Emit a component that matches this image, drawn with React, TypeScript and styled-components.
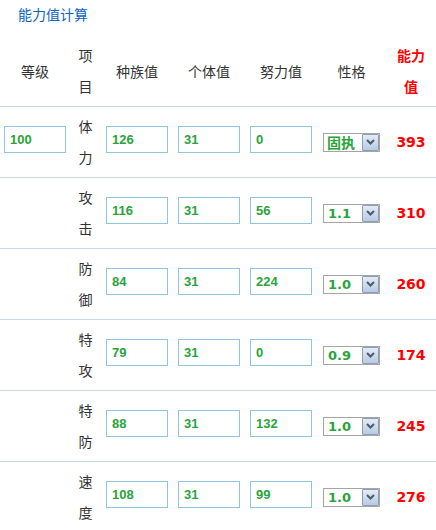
import React from 'react';
import styled, { createGlobalStyle } from 'styled-components';

const GlobalStyle = createGlobalStyle`
  html, body {
    margin: 0;
    padding: 0;
    background: #fff;
  }
  body {
    font-family: 'Noto Sans CJK SC', 'Liberation Sans', sans-serif;
    color: #333;
  }
`;

const COLS = '70px 31px 72px 72px 72px 69px 50px';

const Page = styled.div`
  width: 436px;
`;

const Title = styled.div`
  height: 36px;
  box-sizing: border-box;
  padding: 6px 0 0 18px;
  font-size: 14px;
  line-height: 16px;
  color: #0a64c4;
`;

const Row = styled.div`
  display: grid;
  grid-template-columns: ${COLS};
  height: 71px;
  box-sizing: border-box;
  border-bottom: 1px solid #c9d9ea;
`;

const Cell = styled.div`
  display: flex;
  align-items: center;
  justify-content: center;
  font-size: 14px;
  color: #333;
`;

const Stacked = styled.div<{ $red?: boolean }>`
  display: flex;
  flex-direction: column;
  align-items: center;
  font-size: 14px;
  line-height: 31px;
  color: ${(p) => (p.$red ? '#ff0000' : '#333')};
  font-weight: ${(p) => (p.$red ? 'bold' : 'normal')};
`;

const NumInput = styled.input`
  width: 62px;
  height: 27px;
  box-sizing: border-box;
  margin-bottom: 6px;
  padding: 0 0 0 5px;
  border: 1px solid #8fc6de;
  font-family: 'Liberation Sans', Arial, sans-serif;
  font-size: 13px;
  font-weight: bold;
  color: #2aa33a;
  outline: none;
  background: #fff;
`;

const SelectBox = styled.div`
  width: 57px;
  height: 19px;
  box-sizing: border-box;
  border: 1px solid #a5a5a5;
  display: flex;
  align-items: stretch;
  background: #fff;
`;

const SelectValue = styled.span`
  flex: 1;
  padding-left: 4px;
  font-family: 'DejaVu Sans', 'Noto Sans CJK SC', sans-serif;
  font-size: 13px;
  font-weight: bold;
  line-height: 17px;
  color: #2aa33a;
  white-space: nowrap;
`;

const SelectValueCjk = styled(SelectValue)`
  font-family: 'Noto Sans CJK SC', sans-serif;
  font-size: 14px;
  padding-left: 3px;
`;

const ArrowButton = styled.span`
  width: 17px;
  box-sizing: border-box;
  border: 1px solid #8e9db4;
  border-radius: 1px;
  background: linear-gradient(#e3ebf6, #b7cbe4);
  display: flex;
  align-items: center;
  justify-content: center;
`;

const Result = styled.span`
  font-family: 'DejaVu Sans', Verdana, sans-serif;
  font-size: 14px;
  font-weight: bold;
  color: #ff0000;
`;

type Stat = {
  label: string;
  base: number;
  iv: number;
  ev: number;
  nature: string;
  value: number;
};

const stats: Stat[] = [
  { label: '体力', base: 126, iv: 31, ev: 0, nature: '固执', value: 393 },
  { label: '攻击', base: 116, iv: 31, ev: 56, nature: '1.1', value: 310 },
  { label: '防御', base: 84, iv: 31, ev: 224, nature: '1.0', value: 260 },
  { label: '特攻', base: 79, iv: 31, ev: 0, nature: '0.9', value: 174 },
  { label: '特防', base: 88, iv: 31, ev: 132, nature: '1.0', value: 245 },
  { label: '速度', base: 108, iv: 31, ev: 99, nature: '1.0', value: 276 },
];

const Chevron = () => (
  <svg width="9" height="6" viewBox="0 0 9 6">
    <path d="M1 1 L4.5 4.5 L8 1" fill="none" stroke="#4d5a6c" strokeWidth="2" />
  </svg>
);

const Nature = ({ value }: { value: string }) => {
  const isNumber = /^[0-9.]+$/.test(value);
  return (
    <SelectBox>
      {isNumber ? (
        <SelectValue>{value}</SelectValue>
      ) : (
        <SelectValueCjk>{value}</SelectValueCjk>
      )}
      <ArrowButton>
        <Chevron />
      </ArrowButton>
    </SelectBox>
  );
};

const Chars = ({ text, red }: { text: string; red?: boolean }) => (
  <Stacked $red={red}>
    {text.split('|').map((t) => (
      <span key={t}>{t}</span>
    ))}
  </Stacked>
);

const App = () => {
  return (
    <Page>
      <GlobalStyle />
      <Title>能力值计算</Title>
      <Row>
        <Cell>等级</Cell>
        <Cell>
          <Chars text="项|目" />
        </Cell>
        <Cell>种族值</Cell>
        <Cell>个体值</Cell>
        <Cell>努力值</Cell>
        <Cell>性格</Cell>
        <Cell>
          <Chars text="能力|值" red />
        </Cell>
      </Row>
      {stats.map((s, i) => (
        <Row key={s.label}>
          <Cell>{i === 0 && <NumInput defaultValue="100" />}</Cell>
          <Cell>
            <Chars text={s.label.split('').join('|')} />
          </Cell>
          <Cell>
            <NumInput defaultValue={String(s.base)} />
          </Cell>
          <Cell>
            <NumInput defaultValue={String(s.iv)} />
          </Cell>
          <Cell>
            <NumInput defaultValue={String(s.ev)} />
          </Cell>
          <Cell>
            <Nature value={s.nature} />
          </Cell>
          <Cell>
            <Result>{s.value}</Result>
          </Cell>
        </Row>
      ))}
    </Page>
  );
};

export default App;
